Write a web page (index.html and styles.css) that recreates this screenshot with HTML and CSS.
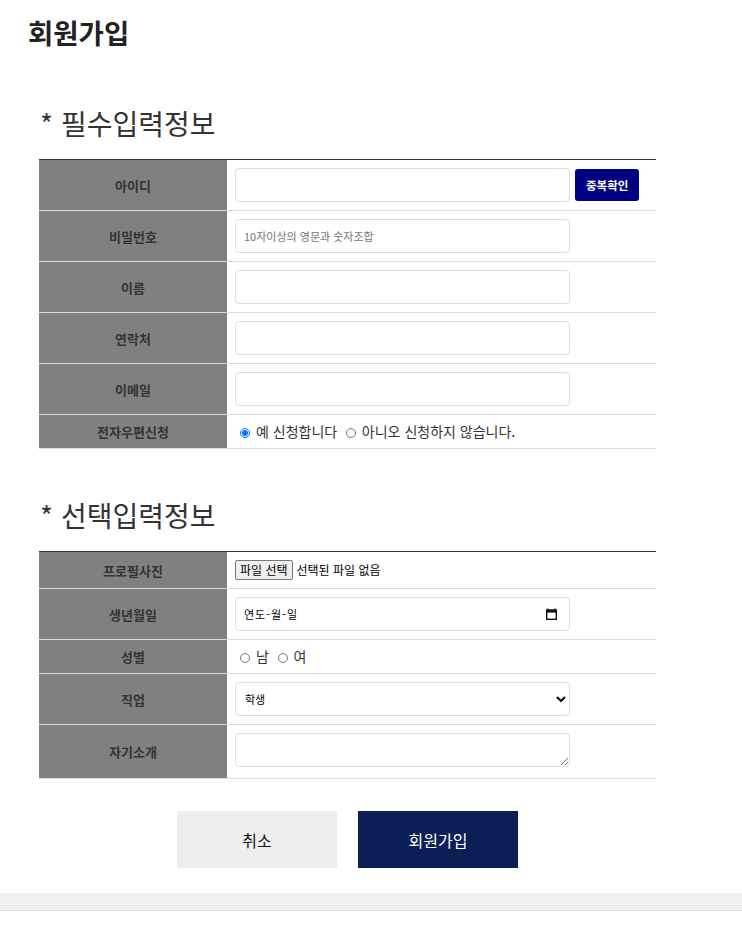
FILE: index.html
```html
<!DOCTYPE html>
<html lang="ko">
<head>
<meta charset="UTF-8">
<meta name="viewport" content="width=device-width, initial-scale=1.0">
<title>회원가입</title>
<link rel="stylesheet" href="styles.css">
</head>
<body>
  <header class="page-head">
    <h1 class="page-title">회원가입</h1>
  </header>

  <main class="join">
    <h2 class="sec-title">* 필수입력정보</h2>
    <table class="form-table">
      <tr>
        <th>아이디</th>
        <td><input class="field" type="text" id="userId"><button class="btn-check" type="button">중복확인</button></td>
      </tr>
      <tr>
        <th>비밀번호</th>
        <td><input class="field" type="password" placeholder="10자이상의 영문과 숫자조합"></td>
      </tr>
      <tr>
        <th>이름</th>
        <td><input class="field" type="text"></td>
      </tr>
      <tr>
        <th>연락처</th>
        <td><input class="field" type="text"></td>
      </tr>
      <tr>
        <th>이메일</th>
        <td><input class="field" type="text"></td>
      </tr>
      <tr>
        <th>전자우편신청</th>
        <td>
          <label class="opt"><input type="radio" name="mail" checked>예 신청합니다</label>
          <label class="opt"><input type="radio" name="mail">아니오 신청하지 않습니다.</label>
        </td>
      </tr>
    </table>

    <h2 class="sec-title sec-title--next">* 선택입력정보</h2>
    <table class="form-table">
      <tr>
        <th>프로필사진</th>
        <td class="file-cell">
          <label class="file-btn" for="photo">파일 선택</label><span class="file-name">선택된 파일 없음</span>
          <input type="file" id="photo" class="file-hidden">
        </td>
      </tr>
      <tr>
        <th>생년월일</th>
        <td>
          <div class="date-field">
            <input type="text" class="date-text" placeholder="연도-월-일">
            <svg class="date-icon" width="11" height="12" viewBox="0 0 11 12">
              <path d="M2 0.5v2M9 0.5v2" stroke="#111" stroke-width="1.4"/>
              <rect x="0.7" y="2" width="9.6" height="9.3" fill="none" stroke="#111" stroke-width="1.4"/>
              <rect x="0.7" y="2" width="9.6" height="2.6" fill="#111"/>
            </svg>
          </div>
        </td>
      </tr>
      <tr>
        <th>성별</th>
        <td>
          <label class="opt"><input type="radio" name="gender">남</label>
          <label class="opt"><input type="radio" name="gender">여</label>
        </td>
      </tr>
      <tr>
        <th>직업</th>
        <td>
          <select class="field field--select">
            <option>학생</option>
            <option>회사원</option>
            <option>자영업</option>
            <option>기타</option>
          </select>
        </td>
      </tr>
      <tr>
        <th>자기소개</th>
        <td><textarea class="field field--area"></textarea></td>
      </tr>
    </table>

    <div class="actions">
      <button class="btn-cancel" type="button">취소</button>
      <button class="btn-submit" type="button">회원가입</button>
    </div>
  </main>

  <footer class="foot"></footer>
</body>
</html>
```

FILE: styles.css
```css
body {
  margin: 0;
  padding: 0;
  font-family: "Noto Sans CJK KR", "Noto Sans", sans-serif;
  color: #333;
  background-color: #fff;
}

.page-head {
  padding: 17px 28px 0;
}

.page-title {
  margin: 0;
  font-size: 27.5px;
  line-height: 30px;
  font-weight: bold;
  color: #222;
}

.join {
  padding: 0 39px;
}

.sec-title {
  margin: 61px 0 21px;
  font-size: 28px;
  line-height: 30px;
  font-weight: normal;
  color: #333;
  padding-left: 1px;
}

.sec-title--next {
  margin-top: 51px;
}

/* 입력 테이블 */
.form-table {
  width: 617px;
  border-collapse: collapse;
  border-top: 1px solid #333;
  font-size: 13px;
  line-height: 17px;
}

.form-table th {
  width: 188px;
  padding: 0;
  background-color: #808080;
  color: #333;
  font-weight: bold;
  text-align: center;
  border-bottom: 1px solid #ddd;
}

.form-table td {
  padding: 8px;
  border-bottom: 1px solid #ddd;
  vertical-align: middle;
}

.field {
  box-sizing: border-box;
  width: 335px;
  height: 34px;
  padding: 0 8px;
  border: 1px solid #ddd;
  border-radius: 4px;
  font-family: inherit;
  font-size: 11px;
  vertical-align: middle;
  background-color: #fff;
}

.field::placeholder {
  color: #757575;
}

.field--select {
  padding-left: 5px;
  color: #000;
}

.field--area {
  height: 34px;
  resize: vertical;
  vertical-align: baseline;
}

.btn-check {
  margin-left: 5px;
  height: 32px;
  padding: 0 11px;
  border: none;
  border-radius: 3px;
  background-color: #000080;
  color: #fff;
  font-family: inherit;
  font-size: 11.5px;
  font-weight: bold;
  vertical-align: middle;
  cursor: pointer;
}

.opt {
  font-size: 14px;
}

.opt input {
  width: 10px;
  height: 10px;
  margin: 0 6px 0 5px;
  vertical-align: -1px;
}

/* 파일 선택 */
.file-btn {
  display: inline-block;
  padding: 1px 4px;
  border: 1px solid #767676;
  border-radius: 2px;
  background-color: #efefef;
  color: #000;
  font-size: 12px;
  line-height: 16px;
  margin-right: 4px;
}

.file-name {
  font-size: 12px;
  color: #000;
}

.file-hidden {
  display: none;
}

/* 생년월일 */
.date-field {
  box-sizing: border-box;
  width: 335px;
  height: 34px;
  display: flex;
  align-items: center;
  padding: 0 12px 0 8px;
  border: 1px solid #ddd;
  border-radius: 4px;
}

.date-text {
  flex: 1;
  border: none;
  outline: none;
  padding: 0;
  font-family: inherit;
  font-size: 11px;
  letter-spacing: 1px;
}

.date-text::placeholder {
  color: #000;
}

/* 버튼 */
.actions {
  width: 617px;
  display: flex;
  justify-content: center;
  gap: 21px;
  margin-top: 32px;
}

.btn-cancel,
.btn-submit {
  width: 160px;
  height: 57px;
  border: none;
  font-family: inherit;
  font-size: 16px;
  cursor: pointer;
}

.btn-cancel {
  background-color: #eee;
  color: #111;
}

.btn-submit {
  background-color: #0b1f56;
  color: #fff;
}

.foot {
  margin-top: 25px;
  height: 17px;
  background-color: #f0f0f0;
  border-bottom: 1px solid #ddd;
}
```
